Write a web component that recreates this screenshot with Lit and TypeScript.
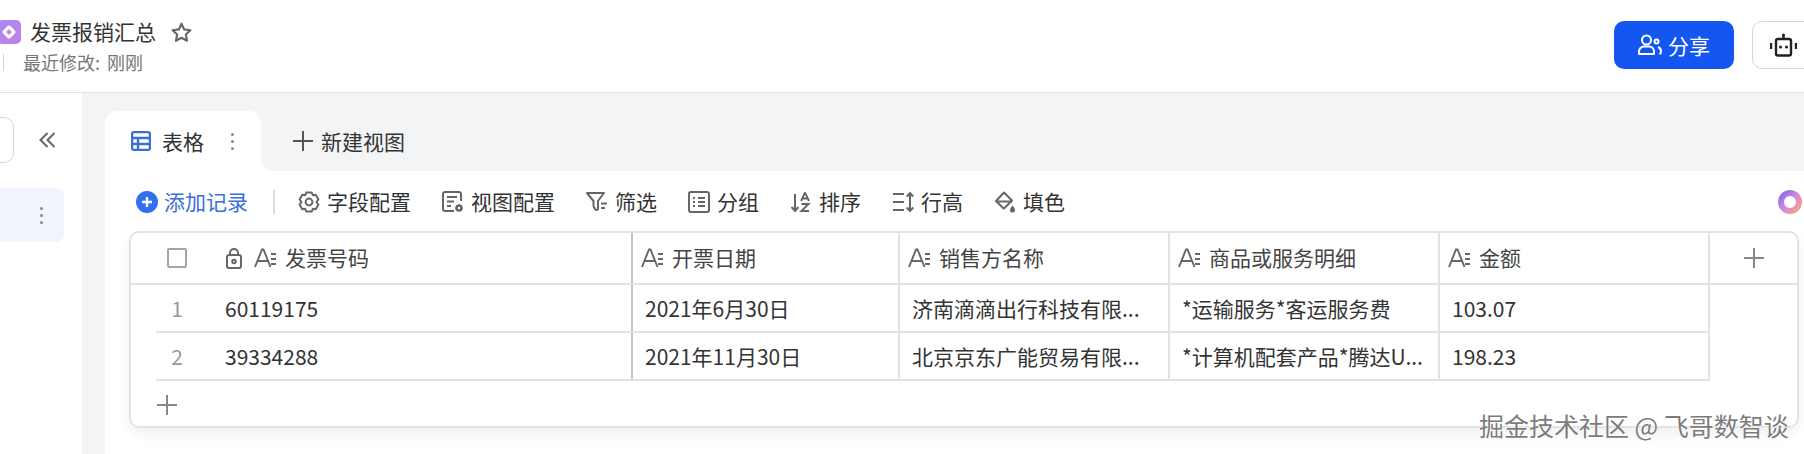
import { css, html, LitElement, svg } from "lit";
import { customElement } from "lit/decorators.js";

const icon = (w: number, h: number, body: unknown, vw = w, vh = h) => html`<svg
  class="ic"
  width=${w}
  height=${h}
  viewBox="0 0 ${vw} ${vh}"
  fill="none"
  stroke="currentColor"
  stroke-width="2"
>
  ${body}
</svg>`;

const ICONS = {
  logo: html`<svg width="24" height="24" viewBox="0 0 24 24">
    <defs>
      <linearGradient id="lg" x1="0" y1="0" x2="1" y2="1">
        <stop offset="0" stop-color="#a98af5" />
        <stop offset="1" stop-color="#c57ee8" />
      </linearGradient>
    </defs>
    <rect width="24" height="24" rx="5" fill="url(#lg)" />
    <rect x="8.400" y="8.400" width="7.200" height="7.200" rx="0.800" transform="rotate(45 12 12)" fill="none" stroke="#fff" stroke-width="3.200" />
  </svg>`,
  star: icon(21, 21, svg`<path d="M10 1.500l2.500 5.500 6 .8-4.400 4.100 1.200 6L10 15l-5.300 2.900 1.200-6L1.500 7.800l6-.8z" stroke-linejoin="round" />`, 20, 20),
  table: html`<svg class="ic" width="20" height="20" viewBox="0 0 20 20" fill="none" stroke="currentColor" stroke-width="2.300">
    <rect x="1.100" y="1.100" width="17.800" height="17.800" rx="2" />
    <path d="M1 7h18M1 13h18M7 7v12" />
  </svg>`,
  plus: icon(20, 20, svg`<path d="M10 0v20M0 10h20" />`),
  add: html`<svg width="22" height="22" viewBox="0 0 22 22">
    <circle cx="11" cy="11" r="11" fill="#3370f0" />
    <path d="M11 6v10M6 11h10" stroke="#fff" stroke-width="2.400" />
  </svg>`,
  gear: icon(22, 22, svg`<path d="M8.200 1.500h5.600l1 2.700 2.900-.5 2.700 4.700-1.900 2.600 1.900 2.600-2.700 4.700-2.900-.5-1 2.700H8.200l-1-2.700-2.900.5-2.700-4.700L3.500 11 1.600 8.400l2.700-4.700 2.900.5z" stroke-linejoin="round" /><circle cx="11" cy="11" r="3.400" />`),
  viewCfg: icon(22, 22, svg`<path d="M12 20H3a2 2 0 0 1-2-2V3a2 2 0 0 1 2-2h14a2 2 0 0 1 2 2v7" /><path d="M5 6h10M5 10.500h7M5 15h4" /><circle cx="17" cy="17" r="2.500" stroke-width="2.600" />`),
  filter: icon(22, 22, svg`<path d="M1 2h17l-6 8v7.500a1.500 1.500 0 0 1-3 0 4 4 0 0 1-1.500-3V10z" stroke-linejoin="round" /><path d="M15 12.500h6M15 17h4" />`),
  group: icon(22, 22, svg`<rect x="1" y="1" width="20" height="20" rx="2" /><path d="M5 7h2M5 11h2M5 15h2M10 7h7M10 11h7M10 15h7" />`),
  sort: html`<svg class="ic" width="22" height="22" viewBox="0 0 22 22" fill="none" stroke="currentColor" stroke-width="2">
    <path d="M5 3v17M1.500 16l3.500 4 3.500-4" />
    <path d="M11 10l3.800-8h.4l3.800 8M12.500 7.500h5" stroke-width="1.800" />
    <path d="M11.500 13h7l-7 7h7.500" stroke-width="2" />
  </svg>`,
  rowH: icon(22, 22, svg`<path d="M1 3h11M1 11h11M1 19h11M18 2v18M14.800 5.500L18 2l3.200 3.500M14.800 16.500L18 20l3.200-3.500" />`),
  fill: html`<svg class="ic" width="22" height="22" viewBox="0 0 22 22" fill="none" stroke="currentColor" stroke-width="2">
    <path d="M10 1.500l8 8-7.500 7.500a1 1 0 0 1-1.400 0L2 10z" stroke-linejoin="round" />
    <path d="M2 10.500h16" />
    <path d="M18.500 14.500c1.500 2 2.500 3 2.500 4.500a2.500 2.500 0 0 1-5 0c0-1.500 1-2.500 2.500-4.500z" fill="currentColor" stroke="none" />
  </svg>`,
  textField: icon(22, 20, svg`<path d="M1 19L8 1.500h1.500L16.500 19M4 13h10" stroke-width="1.900" /><path d="M17 6h5M17 11h5M17 16h5" />`),
  lock: icon(16, 21, svg`<rect x="1" y="7" width="14" height="13" rx="2" /><path d="M4 7V5a4 4 0 0 1 8 0v2" /><circle cx="8" cy="13.500" r="1.800" />`),
  share: html`<svg width="24" height="22" viewBox="0 0 24 22" fill="none" stroke="#fff" stroke-width="2">
    <circle cx="8.500" cy="6" r="4.500" />
    <path d="M1 20v-2.500a5 5 0 0 1 5-5h5a5 5 0 0 1 5 5V20z" stroke-linejoin="round" />
    <circle cx="18.500" cy="7.500" r="2" />
    <path d="M20 13c2 .6 3 2.500 3 4.500 0 1-.5 2-1.500 2.500" />
  </svg>`,
  robot: html`<svg width="27" height="24" viewBox="0 0 27 24" fill="none" stroke="#222" stroke-width="2.400">
    <rect x="6" y="6" width="15" height="16.500" rx="2" />
    <path d="M13.500 6V2M1 10v6M26 10v6" />
    <circle cx="13.500" cy="2" r="1.500" fill="#222" stroke="none" />
    <circle cx="10.500" cy="14" r="1.500" fill="#222" stroke="none" />
    <circle cx="16.500" cy="14" r="1.500" fill="#222" stroke="none" />
  </svg>`,
  chevrons: icon(17, 16, svg`<path d="M8.500 1L1.500 8l7 7M15.500 1L8.500 8l7 7" />`),
  orb: html`<svg width="24" height="24" viewBox="0 0 24 24" fill="none">
    <defs>
      <linearGradient id="og" x1="0" y1="0" x2="1" y2="1">
        <stop offset="0" stop-color="#8a6cf0" />
        <stop offset="0.55" stop-color="#d78ae0" />
        <stop offset="1" stop-color="#fba27a" />
      </linearGradient>
    </defs>
    <circle cx="12" cy="12" r="9" stroke="url(#og)" stroke-width="6" />
  </svg>`,
};

const TOOLS = [
  { icon: ICONS.gear, label: "字段配置" },
  { icon: ICONS.viewCfg, label: "视图配置" },
  { icon: ICONS.filter, label: "筛选" },
  { icon: ICONS.group, label: "分组" },
  { icon: ICONS.sort, label: "排序" },
  { icon: ICONS.rowH, label: "行高" },
  { icon: ICONS.fill, label: "填色" },
];

const COLUMNS = ["开票日期", "销售方名称", "商品或服务明细", "金额"];

const ROWS = [
  ["60119175", "2021年6月30日", "济南滴滴出行科技有限...", "*运输服务*客运服务费", "103.07"],
  ["39334288", "2021年11月30日", "北京京东广能贸易有限...", "*计算机配套产品*腾达U...", "198.23"],
];

@customElement("app-root")
export class AppRoot extends LitElement {
  static override styles = css`
    :host {
      display: block;
      width: 1804px;
      height: 454px;
      overflow: hidden;
      position: relative;
      background: #fff;
      color: #333;
      font-family: "Noto Sans CJK SC", "Noto Sans", sans-serif;
      font-size: 21px;
    }
    svg {
      display: block;
      flex: none;
    }
    .top {
      height: 92px;
      border-bottom: 1px solid #e2e3e5;
      display: flex;
      align-items: flex-start;
    }
    .doc {
      margin-left: -3px;
      padding-top: 20px;
    }
    .doc-title {
      display: flex;
      align-items: center;
      height: 24px;
      gap: 9px;
      line-height: 24px;
    }
    .doc-name {
      padding-bottom: 2px;
    }
    .star {
      margin-left: 6px;
      color: #666;
    }
    .doc-sub {
      display: flex;
      align-items: center;
      margin-top: 7px;
      height: 22px;
      font-size: 18px;
      color: #777;
      word-spacing: 3px;
    }
    .doc-sep {
      width: 1px;
      height: 17px;
      margin: 0 19px 0 6px;
      background: #d4d4d4;
    }
    .top-right {
      margin-left: auto;
      margin-right: -10px;
      padding-top: 21px;
      display: flex;
      gap: 18px;
    }
    .share {
      width: 120px;
      height: 48px;
      border-radius: 10px;
      background: #1456f0;
      color: #fff;
      display: flex;
      align-items: center;
      justify-content: center;
      gap: 6px;
    }
    .robot {
      width: 62px;
      height: 48px;
      box-sizing: border-box;
      border: 1px solid #d8d8d8;
      border-radius: 10px;
      display: flex;
      align-items: center;
      justify-content: center;
    }
    .body {
      display: flex;
      height: 361px;
    }
    .side {
      width: 82px;
      flex: none;
      padding-top: 24px;
      box-sizing: border-box;
    }
    .side-top {
      display: flex;
      align-items: center;
    }
    .search {
      width: 30px;
      height: 46px;
      margin-left: -16px;
      box-sizing: border-box;
      border: 1px solid #d8d8d8;
      border-radius: 10px;
    }
    .chev {
      margin-left: 25px;
      color: #666;
    }
    .side-item {
      width: 64px;
      height: 54px;
      margin-top: 25px;
      background: #f2f5fe;
      border-radius: 0 8px 8px 0;
      padding-left: 40px;
      box-sizing: border-box;
      display: flex;
      align-items: center;
    }
    .dots {
      display: flex;
      flex-direction: column;
      gap: 4px;
    }
    .dots i {
      width: 3px;
      height: 3px;
      border-radius: 50%;
      background: #888;
    }
    .main {
      flex: 1;
      min-width: 0;
      background: #f3f4f6;
      padding: 18px 0 0 23px;
      display: flex;
      flex-direction: column;
    }
    .tabs {
      height: 60px;
      flex: none;
      display: flex;
      align-items: stretch;
    }
    .tab {
      width: 156px;
      box-sizing: border-box;
      padding-left: 26px;
      background: #fff;
      border-radius: 12px 12px 0 0;
      display: flex;
      align-items: center;
      position: relative;
    }
    .tab::after {
      content: "";
      position: absolute;
      left: 100%;
      bottom: 0;
      width: 12px;
      height: 12px;
      background: radial-gradient(circle at 100% 0, transparent 11.5px, #fff 12px);
    }
    .tab .ic {
      color: #3a6fd8;
    }
    .tab-name {
      margin-left: 11px;
    }
    .tab .dots {
      margin-left: 27px;
    }
    .new-view {
      margin-left: 32px;
      display: flex;
      align-items: center;
      gap: 8px;
    }
    .new-view .ic {
      color: #555;
    }
    .panel {
      flex: 1;
      background: #fff;
      position: relative;
    }
    .toolbar {
      height: 60px;
      padding: 2px 2px 0 31px;
      box-sizing: border-box;
      display: flex;
      align-items: center;
    }
    .add {
      display: flex;
      align-items: center;
      gap: 6px;
      color: #3a6fd8;
    }
    .add span,
    .tool span {
      padding-bottom: 2px;
    }
    .tool-sep {
      width: 2px;
      height: 24px;
      margin: 0 23px 0 25px;
      background: #dcdcdc;
    }
    .tools {
      display: flex;
      align-items: center;
      gap: 31px;
    }
    .tool {
      display: flex;
      align-items: center;
      gap: 7px;
    }
    .tool .ic {
      color: #666;
    }
    .orb {
      margin-left: auto;
    }
    .sheet {
      width: 1670px;
      height: 197px;
      margin-left: 24px;
      box-sizing: border-box;
      border: 2px solid #e3e3e3;
      border-radius: 10px;
      box-shadow: 0 6px 14px rgba(0, 0, 0, 0.06);
    }
    .head {
      height: 50px;
      display: grid;
      grid-template-columns: 502px 267px 270px 270px 270px 1fr;
      border-bottom: 2px solid #e3e3e3;
    }
    .hcell {
      display: flex;
      align-items: center;
      padding-left: 8px;
      border-right: 2px solid #e3e3e3;
      color: #444;
    }
    .hcell .ic {
      color: #666;
    }
    .hcell .label {
      margin-left: 9px;
      padding-bottom: 2px;
    }
    .hcell.first {
      padding-left: 36px;
      border-right-color: #c4c4c4;
    }
    .check {
      width: 20px;
      height: 20px;
      box-sizing: border-box;
      border: 2px solid #a4a4a4;
      border-radius: 2px;
      margin-right: 39px;
    }
    .lock {
      margin-right: 12px;
    }
    .hcell.end {
      border-right: 0;
      justify-content: center;
      padding-left: 0;
    }
    .hcell.end .ic {
      color: #888;
    }
    .row {
      height: 48px;
      box-sizing: border-box;
      margin-left: 25px;
      display: grid;
      grid-template-columns: 477px 267px 270px 270px 270px;
      width: 1554px;
      border-bottom: 2px solid #e3e3e3;
    }
    .cell {
      display: flex;
      align-items: center;
      padding-left: 12px;
      border-right: 2px solid #e3e3e3;
      white-space: nowrap;
      overflow: hidden;
    }
    .cell.first {
      padding-left: 0;
      border-right-color: #c4c4c4;
    }
    .num {
      width: 42px;
      margin-right: 27px;
      text-align: center;
      color: #999;
    }
    .add-row {
      padding: 14px 0 0 26px;
      color: #888;
    }
    .mark {
      position: absolute;
      left: 1479px;
      top: 406px;
      font-size: 25px;
      line-height: 38px;
      white-space: nowrap;
      color: #7c7c7c;
      text-shadow: 0 0 2px #fff, 0 0 2px #fff;
    }
  `;

  override render() {
    return html`
      <div class="top">
        <div class="doc">
          <div class="doc-title">
            ${ICONS.logo}<span class="doc-name">发票报销汇总</span><span class="star">${ICONS.star}</span>
          </div>
          <div class="doc-sub"><span class="doc-sep"></span>最近修改: 刚刚</div>
        </div>
        <div class="top-right">
          <div class="share">${ICONS.share}<span>分享</span></div>
          <div class="robot">${ICONS.robot}</div>
        </div>
      </div>
      <div class="body">
        <div class="side">
          <div class="side-top">
            <div class="search"></div>
            <span class="chev">${ICONS.chevrons}</span>
          </div>
          <div class="side-item"><span class="dots"><i></i><i></i><i></i></span></div>
        </div>
        <div class="main">
          <div class="tabs">
            <div class="tab">
              ${ICONS.table}<span class="tab-name">表格</span>
              <span class="dots"><i></i><i></i><i></i></span>
            </div>
            <div class="new-view">${ICONS.plus}<span>新建视图</span></div>
          </div>
          <div class="panel">
            <div class="toolbar">
              <div class="add">${ICONS.add}<span>添加记录</span></div>
              <span class="tool-sep"></span>
              <div class="tools">
                ${TOOLS.map((t) => html`<div class="tool">${t.icon}<span>${t.label}</span></div>`)}
              </div>
              <span class="orb">${ICONS.orb}</span>
            </div>
            <div class="sheet">
              <div class="head">
                <div class="hcell first">
                  <span class="check"></span>
                  <span class="lock">${ICONS.lock}</span>
                  ${ICONS.textField}<span class="label">发票号码</span>
                </div>
                ${COLUMNS.map(
                  (c) => html`<div class="hcell">${ICONS.textField}<span class="label">${c}</span></div>`,
                )}
                <div class="hcell end">${ICONS.plus}</div>
              </div>
              ${ROWS.map(
                (r, i) => html`<div class="row">
                  <div class="cell first"><span class="num">${i + 1}</span>${r[0]}</div>
                  ${r.slice(1).map((v) => html`<div class="cell">${v}</div>`)}
                </div>`,
              )}
              <div class="add-row">${ICONS.plus}</div>
            </div>
          </div>
        </div>
      </div>
      <div class="mark">掘金技术社区 @ 飞哥数智谈</div>
    `;
  }
}
